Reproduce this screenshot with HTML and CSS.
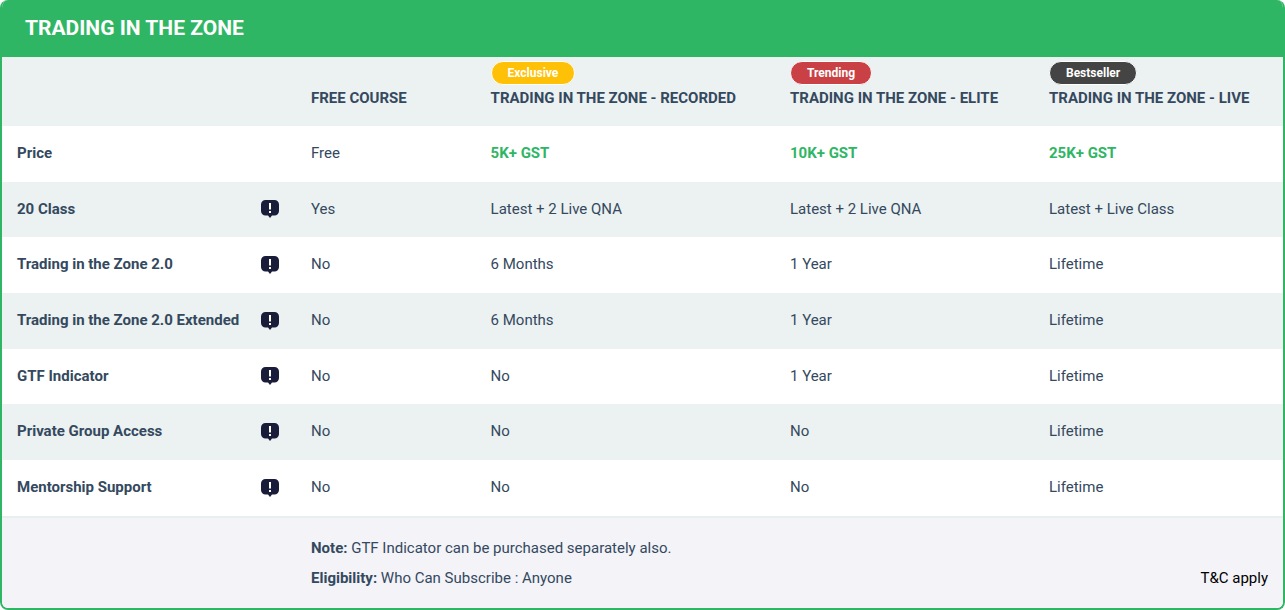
FILE: index.html
```html
<!DOCTYPE html>
<html lang="en">
<head>
<meta charset="utf-8">
<title>Trading in the Zone</title>
<link rel="stylesheet" href="styles.css">
</head>
<body>
<section class="card">
  <h1 class="card-title">TRADING IN THE ZONE</h1>
  <table class="compare">
    <colgroup>
      <col class="col-feature"><col class="col-free"><col class="col-recorded"><col class="col-elite"><col class="col-live">
    </colgroup>
    <thead>
      <tr>
        <th></th>
        <th>FREE COURSE</th>
        <th><span class="badge badge-yellow">Exclusive</span>TRADING IN THE ZONE - RECORDED</th>
        <th><span class="badge badge-red">Trending</span>TRADING IN THE ZONE - ELITE</th>
        <th><span class="badge badge-dark">Bestseller</span>TRADING IN THE ZONE - LIVE</th>
      </tr>
    </thead>
    <tbody>
      <tr>
        <td class="feature">Price</td>
        <td>Free</td>
        <td class="price">5K+ GST</td>
        <td class="price">10K+ GST</td>
        <td class="price">25K+ GST</td>
      </tr>
      <tr>
        <td class="feature"><div class="feature-inner">20 Class<svg class="info" viewBox="0 0 18 18"><path d="M4.500 0h9A4.500 4.500 0 0 1 18 4.500v6.500a4.500 4.500 0 0 1-4.500 4.500H11L9 18l-2-2.500H4.500A4.500 4.500 0 0 1 0 11V4.500A4.500 4.500 0 0 1 4.500 0z"/><path class="mark" d="M8 3h2v6.500H8zM8 11h2v2H8z"/></svg></div></td>
        <td>Yes</td><td>Latest + 2 Live QNA</td><td>Latest + 2 Live QNA</td><td>Latest + Live Class</td>
      </tr>
      <tr>
        <td class="feature"><div class="feature-inner">Trading in the Zone 2.0<svg class="info" viewBox="0 0 18 18"><path d="M4.500 0h9A4.500 4.500 0 0 1 18 4.500v6.500a4.500 4.500 0 0 1-4.500 4.500H11L9 18l-2-2.500H4.500A4.500 4.500 0 0 1 0 11V4.500A4.500 4.500 0 0 1 4.500 0z"/><path class="mark" d="M8 3h2v6.500H8zM8 11h2v2H8z"/></svg></div></td>
        <td>No</td><td>6 Months</td><td>1 Year</td><td>Lifetime</td>
      </tr>
      <tr>
        <td class="feature"><div class="feature-inner">Trading in the Zone 2.0 Extended<svg class="info" viewBox="0 0 18 18"><path d="M4.500 0h9A4.500 4.500 0 0 1 18 4.500v6.500a4.500 4.500 0 0 1-4.500 4.500H11L9 18l-2-2.500H4.500A4.500 4.500 0 0 1 0 11V4.500A4.500 4.500 0 0 1 4.500 0z"/><path class="mark" d="M8 3h2v6.500H8zM8 11h2v2H8z"/></svg></div></td>
        <td>No</td><td>6 Months</td><td>1 Year</td><td>Lifetime</td>
      </tr>
      <tr>
        <td class="feature"><div class="feature-inner">GTF Indicator<svg class="info" viewBox="0 0 18 18"><path d="M4.500 0h9A4.500 4.500 0 0 1 18 4.500v6.500a4.500 4.500 0 0 1-4.500 4.500H11L9 18l-2-2.500H4.500A4.500 4.500 0 0 1 0 11V4.500A4.500 4.500 0 0 1 4.500 0z"/><path class="mark" d="M8 3h2v6.500H8zM8 11h2v2H8z"/></svg></div></td>
        <td>No</td><td>No</td><td>1 Year</td><td>Lifetime</td>
      </tr>
      <tr>
        <td class="feature"><div class="feature-inner">Private Group Access<svg class="info" viewBox="0 0 18 18"><path d="M4.500 0h9A4.500 4.500 0 0 1 18 4.500v6.500a4.500 4.500 0 0 1-4.500 4.500H11L9 18l-2-2.500H4.500A4.500 4.500 0 0 1 0 11V4.500A4.500 4.500 0 0 1 4.500 0z"/><path class="mark" d="M8 3h2v6.500H8zM8 11h2v2H8z"/></svg></div></td>
        <td>No</td><td>No</td><td>No</td><td>Lifetime</td>
      </tr>
      <tr>
        <td class="feature"><div class="feature-inner">Mentorship Support<svg class="info" viewBox="0 0 18 18"><path d="M4.500 0h9A4.500 4.500 0 0 1 18 4.500v6.500a4.500 4.500 0 0 1-4.500 4.500H11L9 18l-2-2.500H4.500A4.500 4.500 0 0 1 0 11V4.500A4.500 4.500 0 0 1 4.500 0z"/><path class="mark" d="M8 3h2v6.500H8zM8 11h2v2H8z"/></svg></div></td>
        <td>No</td><td>No</td><td>No</td><td>Lifetime</td>
      </tr>
    </tbody>
  </table>
  <footer class="notes">
    <div class="notes-text">
      <p><strong>Note:</strong> GTF Indicator can be purchased separately also.</p>
      <p><strong>Eligibility:</strong> Who Can Subscribe : Anyone</p>
    </div>
    <p class="terms">T&amp;C apply</p>
  </footer>
</section>
</body>
</html>
```

FILE: styles.css
```css
* { box-sizing: border-box; }
html, body { margin: 0; padding: 0; background: #fff; }
body { font-family: Roboto, "Liberation Sans", sans-serif; font-size: 15px; color: #34495e; }
.card { width: 1285px; height: 610px; border: 2px solid #2fb664; border-top: 0; border-radius: 8px; overflow: hidden; display: flex; flex-direction: column; background: #fff; }
.card-title { margin: 0 -2px; height: 57px; flex: none; background: #2fb664; color: #fff; font-size: 21px; font-weight: 700; line-height: 57px; padding-left: 25px; }
.compare { width: 1281px; table-layout: fixed; border-collapse: collapse; flex: none; }
.col-feature { width: 294px; }
.col-free { width: 179.600px; }
.col-recorded { width: 299.400px; }
.col-elite { width: 259px; }
.col-live { width: 249px; }
th { height: 69px; padding: 0 15px 17px; text-align: left; vertical-align: bottom; font-size: 15px; font-weight: 700; line-height: 22px; background: #ecf1f2; white-space: nowrap; position: relative; }
td { height: 55.670px; padding: 0 15px 1.400px; vertical-align: middle; line-height: 22px; white-space: nowrap; }
tbody tr:nth-child(even) td { background: #ecf1f2; }
.feature { font-weight: 700; }
.feature-inner { display: flex; align-items: center; justify-content: space-between; }
.info { width: 18px; height: 18px; flex: none; fill: #1a1d3a; margin: 1px 2px 0 0; }
.info .mark { fill: #fff; }
.price { color: #2fb664; font-weight: 700; }
.badge { position: absolute; top: 4px; left: 15px; height: 24px; padding: 0 16px; border: 1px solid #fff; border-radius: 12px; color: #fff; font-size: 12px; line-height: 22px; font-weight: 700; }
.badge-yellow { background: #ffc107; }
.badge-red { background: #c94145; }
.badge-dark { background: #444; }
.notes { flex: 1; display: flex; justify-content: space-between; align-items: flex-end; padding: 15px 15px 16px 309px; background: #f3f3f8; border-top: 2px solid #e6f0ec; }
.notes p { margin: 0; line-height: 30px; }
.terms { color: #000; }
```
